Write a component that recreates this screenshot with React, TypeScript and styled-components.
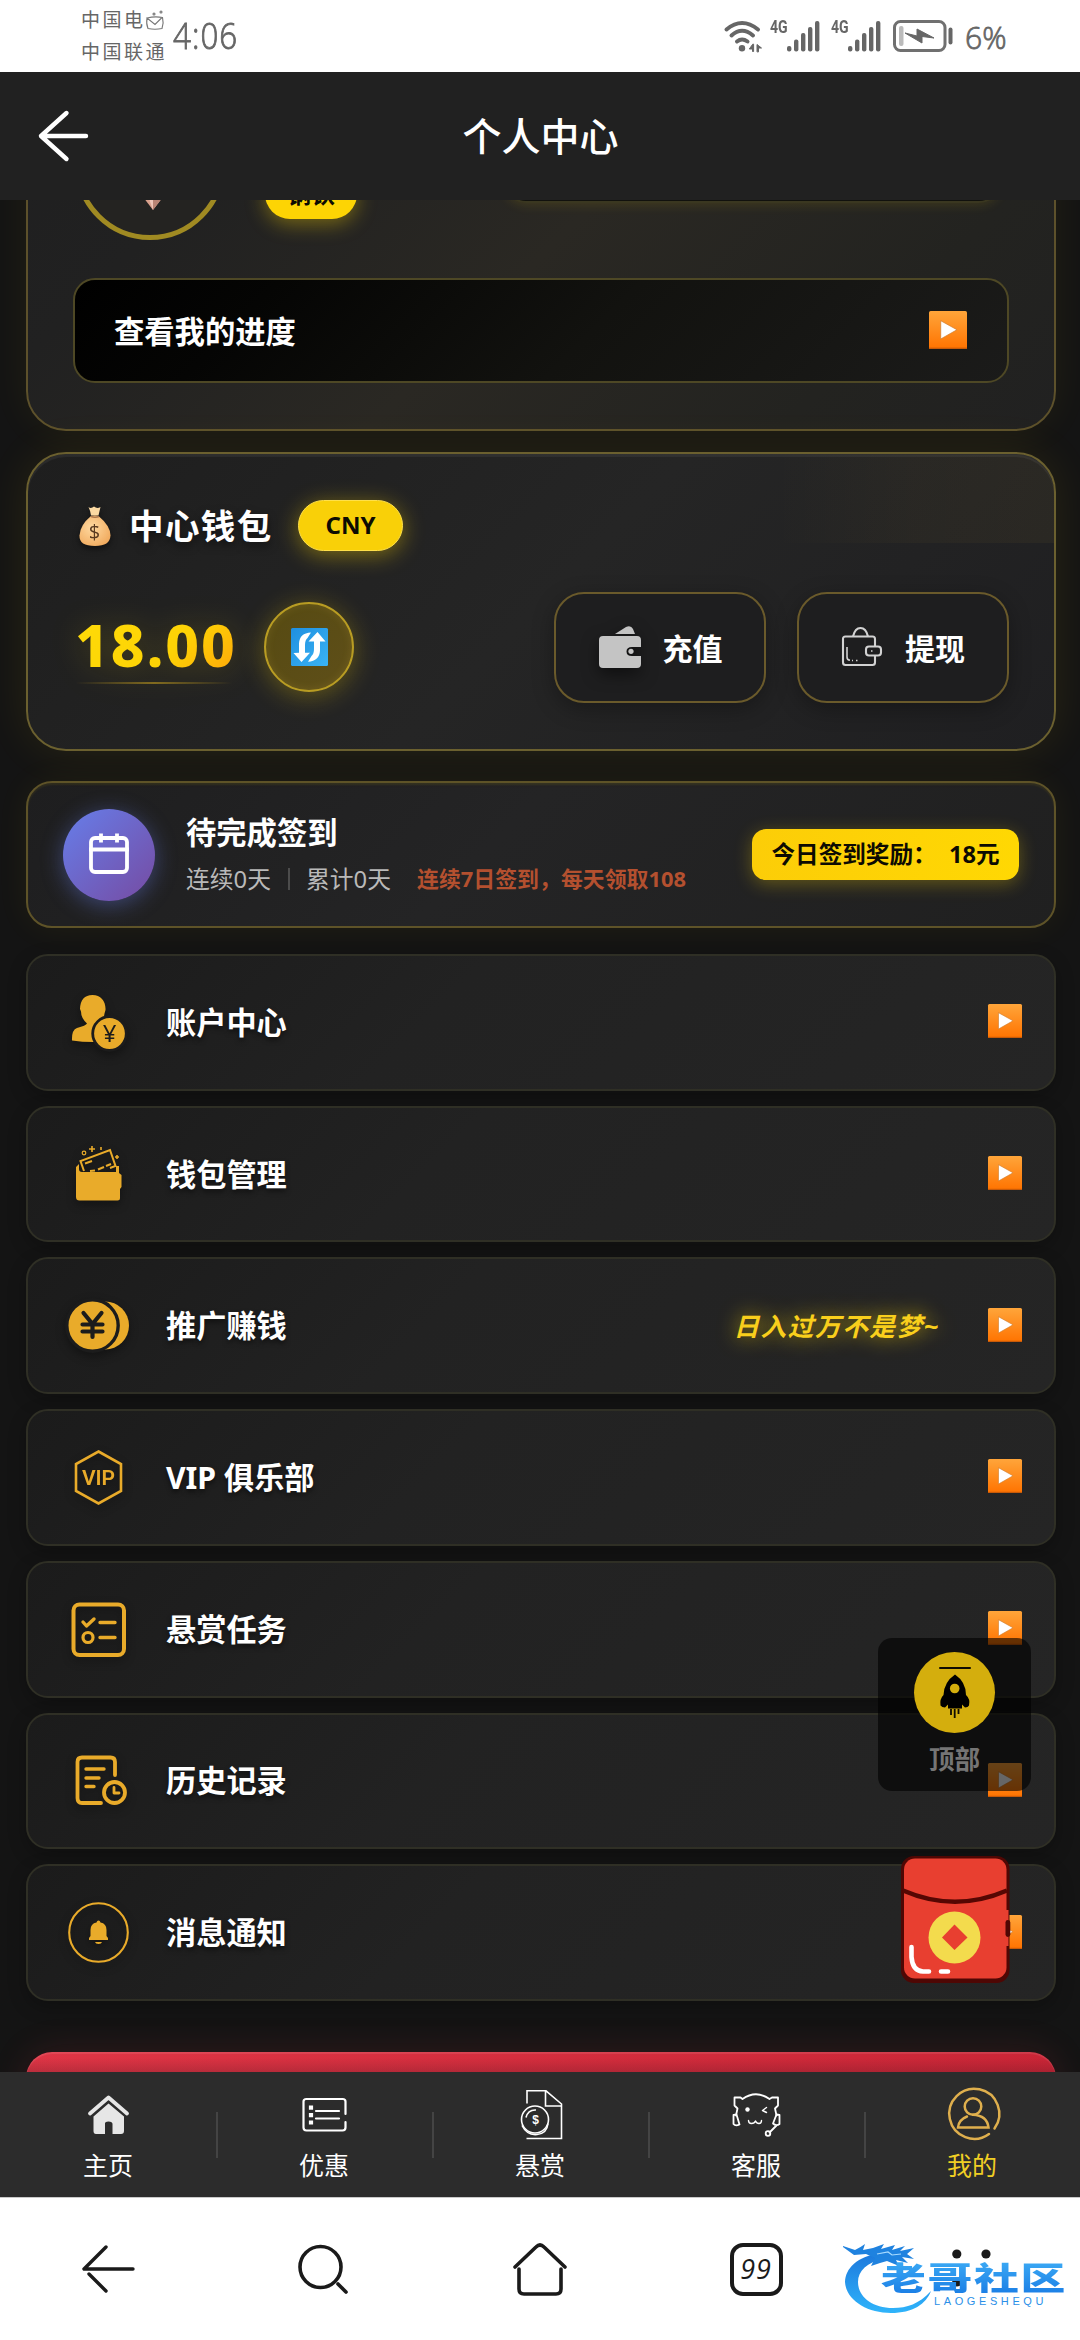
import React from "react";
import styled, { createGlobalStyle, css } from "styled-components";

const GlobalStyle = createGlobalStyle`
  * { box-sizing: border-box; }
  html, body { margin: 0; padding: 0; background: #141414; }
  body { font-family: "Noto Sans", "Noto Sans CJK SC", sans-serif; color: #fff; }
  svg { display: block; flex: none; overflow: visible; }
`;

const gold = "#e9ab2a";

const Phone = styled.div`
  width: 1080px;
  height: 2340px;
  display: flex;
  flex-direction: column;
  overflow: hidden;
  background: #141414;
`;

/* ---------- status bar ---------- */

const StatusBar = styled.div`
  height: 72px;
  flex: none;
  background: #fff;
  color: #666;
  display: flex;
  align-items: center;
  padding: 0 74px 0 81px;
`;

const Carriers = styled.div`
  display: flex;
  flex-direction: column;
  gap: 12px;
  width: 89px;
`;

const Carrier = styled.div`
  height: 20px;
  font-size: 19px;
  line-height: 20px;
  letter-spacing: 2.5px;
  font-weight: 400;
  display: flex;
  align-items: center;
  white-space: nowrap;
`;

const Clock = styled.div`
  width: 84px;
  font-family: "Open Sans", sans-serif;
  font-size: 36px;
  line-height: 40px;
  font-weight: 300;
  -webkit-text-stroke: 0.9px #666;
  transform: scaleX(0.87);
  transform-origin: left center;
  margin-left: 3px;
  letter-spacing: 1.2px;
`;

const StatusRight = styled.div`
  margin-left: auto;
  display: flex;
  align-items: center;
  height: 32px;
`;

const NetTag = styled.span`
  font-family: Roboto, sans-serif;
  font-size: 19px;
  line-height: 14px;
  font-weight: 700;
  align-self: flex-start;
  width: 17px;
  transform: scaleX(0.74);
  transform-origin: left center;
`;

const Percent = styled.span`
  font-family: "Open Sans", sans-serif;
  font-size: 32px;
  line-height: 32px;
  font-weight: 300;
  -webkit-text-stroke: 0.8px #666;
  margin-left: 11px;
  width: 41px;
  transform: translateY(1px) scaleX(0.94);
  transform-origin: left center;
`;

const Gap = styled.span<{ $w: number }>`
  width: ${(p) => p.$w}px;
  flex: none;
`;

/* ---------- header ---------- */

const Header = styled.header`
  height: 128px;
  flex: none;
  background: #212121;
  display: grid;
  grid-template-columns: 200px 1fr 200px;
  align-items: center;
  padding: 0 0 0 38px;
`;

const Title = styled.h1`
  margin: 0;
  padding-right: 37px;
  text-align: center;
  font-size: 39px;
  line-height: 50px;
  font-weight: 500;
`;

/* ---------- scroll area ---------- */

const Content = styled.main`
  position: relative;
  height: 1872px;
  flex: none;
  overflow: hidden;
  padding: 0 24px 0 26px;
  display: flex;
  flex-direction: column;
  background: #141414;
`;

const cardBase = css`
  flex: none;
  border: 2px solid #5d512b;
  border-radius: 40px;
`;

const ProfileCard = styled.section`
  ${cardBase}
  margin-top: -120px;
  height: 351px;
  padding: 8px 45px 46px;
  display: flex;
  flex-direction: column;
  background: linear-gradient(135deg, #1f1f20 0%, #212121 20%, #2a2823 50%, #232320 80%, #212121 100%);
  box-shadow: 0 0 40px rgba(255, 215, 0, 0.06);
`;

const ProfileTop = styled.div`
  height: 150px;
  display: flex;
  align-items: flex-end;
  margin-bottom: 38px;
`;

const Avatar = styled.div`
  width: 150px;
  height: 150px;
  margin-left: 2px;
  border-radius: 50%;
  border: 5px solid #a08a22;
  background: #242321;
  display: flex;
  justify-content: center;
  align-items: flex-end;
  padding: 0 0 25px 6px;
`;

const RankPill = styled.div`
  height: 50px;
  width: 92px;
  margin: 0 0 21px 40px;
  border-radius: 25px;
  background: #fdd404;
  color: #0c0a02;
  font-size: 24px;
  line-height: 50px;
  font-weight: 700;
  text-align: center;
  box-shadow: 0 5px 20px rgba(255, 215, 0, 0.38);
`;

const StatBox = styled.div`
  height: 90px;
  flex: 1;
  margin: 0 8px 37px 147px;
  border-radius: 22px;
  border: 2px solid #3a3720;
  background: #11110d;
  box-shadow: 0 2px 12px rgba(255, 215, 0, 0.12);
`;

const ProgressBar = styled.div`
  height: 105px;
  border: 2px solid #4e4825;
  border-radius: 22px;
  background: linear-gradient(135deg, #000 0%, #050504 20%, #12120f 55%, #1b1b1a 100%);
  display: flex;
  align-items: center;
  justify-content: space-between;
  padding: 0 40px 2px 39px;
  font-size: 30.3px;
  font-weight: 700;
`;

const WalletCard = styled.section`
  ${cardBase}
  position: relative;
  margin-top: 21px;
  height: 299px;
  padding: 46px 45px 45px;
  border-color: #6b602f;
  background: linear-gradient(135deg, #1e1e1e 0%, #252525 50%, #1f1f21 100%);
  box-shadow: 0 0 45px rgba(255, 215, 0, 0.09), inset 0 3px 1px rgba(255, 255, 255, 0.06);
`;

const WalletShine = styled.div`
  position: absolute;
  right: 0;
  top: 1px;
  width: 280px;
  height: 88px;
  border-top-right-radius: 38px;
  background: linear-gradient(90deg, rgba(255, 215, 0, 0) 0%, rgba(255, 200, 60, 0.03) 50%, rgba(255, 200, 60, 0.045) 100%);
`;

const WalletHead = styled.div`
  display: flex;
  align-items: center;
  height: 51px;
`;

const WalletTitle = styled.div`
  margin-left: 18px;
  width: 169px;
  font-size: 34.5px;
  line-height: 50px;
  letter-spacing: 1.4px;
  font-weight: 700;
  text-shadow: 0 4px 8px rgba(0, 0, 0, 0.5);
`;

const Currency = styled.div`
  width: 105px;
  height: 51px;
  border-radius: 26px;
  background: #f9d008;
  border: 1px solid #ffe04a;
  color: #0d0b02;
  font-size: 24px;
  line-height: 48px;
  font-weight: 700;
  text-align: center;
  box-shadow: 0 4px 22px rgba(255, 215, 0, 0.42);
`;

const WalletBody = styled.div`
  display: flex;
  align-items: center;
  height: 111px;
  margin-top: 41px;
`;

const Balance = styled.div`
  width: 158px;
  height: 76px;
  margin-left: 2px;
  margin-top: -3px;
  display: flex;
  flex-direction: column;
  filter: drop-shadow(0 2px 16px rgba(255, 215, 0, 0.2));
`;

const Amount = styled.span`
  align-self: flex-start;
  font-size: 58.5px;
  line-height: 72px;
  font-weight: 800;
  letter-spacing: 2px;
  white-space: nowrap;
  background: linear-gradient(135deg, #ffdc08 0%, #fdd205 60%, #ffa40a 100%);
  -webkit-background-clip: text;
  background-clip: text;
  color: transparent;
`;

const Underline = styled.span`
  height: 2px;
  margin-top: 2px;
  background: linear-gradient(90deg, rgba(180, 145, 30, 0), rgba(180, 145, 30, 0.65) 50%, rgba(180, 145, 30, 0));
`;

const RefreshButton = styled.div`
  width: 90px;
  height: 90px;
  margin-left: 31px;
  margin-top: -1px;
  border-radius: 50%;
  border: 2px solid #b89c23;
  background: linear-gradient(135deg, #564a12, #5f4f19);
  box-shadow: 0 4px 26px rgba(255, 215, 0, 0.3), inset 0 0 10px rgba(255, 225, 90, 0.12);
  display: flex;
  align-items: center;
  justify-content: center;
  padding-bottom: 1px;
`;

const Actions = styled.div`
  margin-left: auto;
  display: flex;
  gap: 31px;
`;

const ActionButton = styled.div<{ $gap: number }>`
  width: 212px;
  height: 111px;
  border: 2px solid #6a5a2b;
  border-radius: 30px;
  background: #1e1e1f;
  box-shadow: 0 6px 22px rgba(0, 0, 0, 0.3);
  display: flex;
  align-items: center;
  justify-content: center;
  gap: ${(p) => p.$gap}px;
  padding: 0 0 2px 1px;
  font-size: 30px;
  font-weight: 700;
`;

const CheckinCard = styled.section`
  flex: none;
  margin-top: 30px;
  height: 147px;
  border: 2px solid #5e5328;
  border-radius: 26px;
  background: linear-gradient(135deg, #1e1e1f 0%, #242425 45%, #202020 100%);
  box-shadow: 0 0 34px rgba(255, 215, 0, 0.06), inset 0 2px 2px rgba(255, 215, 0, 0.08);
  display: flex;
  align-items: center;
  padding: 0 35px;
`;

const CalendarBadge = styled.div`
  width: 92px;
  height: 92px;
  flex: none;
  border-radius: 50%;
  background: linear-gradient(135deg, #667eea 0%, #764ba2 100%);
  box-shadow: 0 4px 22px rgba(102, 126, 234, 0.42);
  display: flex;
  align-items: center;
  justify-content: center;
  padding-bottom: 1px;
`;

const CheckinText = styled.div`
  margin-left: 31px;
  display: flex;
  flex-direction: column;
`;

const CheckinTitle = styled.div`
  font-size: 30.3px;
  line-height: 42px;
  font-weight: 700;
`;

const CheckinMeta = styled.div`
  display: flex;
  align-items: center;
  margin-top: 7px;
  font-size: 23.8px;
  line-height: 36px;
  color: #b9b9b9;
  white-space: nowrap;
`;

const MetaLine = styled.i`
  width: 2px;
  height: 22px;
  margin: 0 16.5px;
  background: #4c4c4c;
`;

const Promo = styled.span`
  margin-left: 26px;
  font-size: 21.9px;
  font-weight: 700;
  color: #b4502f;
`;

const Reward = styled.div`
  margin-left: auto;
  width: 267px;
  height: 51px;
  border-radius: 14px;
  background: linear-gradient(90deg, #fccd08, #ffd803);
  color: #0d0b02;
  font-size: 23.6px;
  line-height: 51px;
  font-weight: 700;
  text-align: center;
  white-space: pre;
  box-shadow: 0 4px 18px rgba(255, 215, 0, 0.3);
`;

const Menu = styled.ul`
  flex: none;
  list-style: none;
  margin: 26px 0 0;
  padding: 0;
  height: 1047px;
  display: grid;
  grid-template-rows: repeat(7, 1fr);
  gap: 15px;
`;

const MenuItem = styled.li`
  border: 2px solid #2f2f25;
  border-radius: 22px;
  background: linear-gradient(135deg, #1b1b1b 0%, #222222 40%, #252525 100%);
  box-shadow: 0 6px 18px rgba(0, 0, 0, 0.25);
  display: flex;
  align-items: center;
  padding: 0 32px 0 40px;
`;

const MenuLabel = styled.span`
  margin-left: 37px;
  padding-top: 1px;
  font-size: 30.2px;
  line-height: 42px;
  font-weight: 700;
  text-shadow: 0 3px 5px rgba(0, 0, 0, 0.5);
`;

const MenuEnd = styled.span`
  margin-left: auto;
  display: flex;
  align-items: center;
  gap: 48px;
  padding-bottom: 2px;
`;

const Slogan = styled.em`
  font-size: 25.6px;
  letter-spacing: 1.6px;
  font-weight: 700;
  font-style: italic;
  color: #f9cf1c;
  text-shadow: 0 0 20px rgba(255, 215, 0, 0.7);
`;

const Logout = styled.div`
  flex: none;
  margin-top: 51px;
  height: 100px;
  border-radius: 26px;
  background: linear-gradient(180deg, rgba(0, 0, 0, 0) 6px, rgba(60, 20, 30, 0.22) 20px),
    linear-gradient(90deg, #df3545, #ca2536);
  box-shadow: 0 0 36px rgba(220, 53, 69, 0.16), inset 0 2px 1px rgba(255, 255, 255, 0.1);
`;

const BackTop = styled.div`
  position: absolute;
  left: 878px;
  top: 1438px;
  width: 153px;
  height: 153px;
  border-radius: 14px;
  background: rgba(0, 0, 0, 0.6);
  display: flex;
  flex-direction: column;
  align-items: center;
  padding-top: 14px;
  font-size: 25.6px;
  line-height: 34px;
  font-weight: 700;
  color: #757575;
  gap: 10px;
`;

const RedPacket = styled.div`
  position: absolute;
  left: 901px;
  top: 1656px;
  width: 112px;
  height: 130px;
`;

/* ---------- bottom bars ---------- */

const TabBar = styled.nav`
  height: 125px;
  flex: none;
  background: #2c2c2c;
  display: grid;
  grid-template-columns: repeat(5, 1fr);
`;

const Tab = styled.div<{ $active?: boolean }>`
  display: flex;
  flex-direction: column;
  align-items: center;
  padding-top: 17px;
  font-size: 25px;
  line-height: 36px;
  color: ${(p) => (p.$active ? "#f0cf24" : "#fff")};
  gap: 6px;
  & + & {
    background: linear-gradient(#444, #444) left 0 top 40px / 2px 46px no-repeat;
  }
`;

const BrowserBar = styled.div`
  position: relative;
  height: 143px;
  flex: none;
  background: #fff;
  border-top: 1px solid #c9c9c9;
  display: grid;
  grid-template-columns: repeat(5, 216px);
  justify-items: center;
  padding-top: 43px;
`;

const TabCount = styled.div`
  width: 53px;
  height: 53px;
  margin-top: 2px;
  border: 4px solid #1a1a1a;
  border-radius: 13px;
  color: #1a1a1a;
  font-family: "Open Sans", sans-serif;
  font-size: 27px;
  font-weight: 400;
  line-height: 43px;
  text-align: center;
  letter-spacing: 1px;
  font-style: italic;
`;

const Watermark = styled.div`
  position: absolute;
  left: 841px;
  top: 44px;
  width: 226px;
  height: 76px;
`;

const WatermarkName = styled.div`
  position: absolute;
  left: 40px;
  top: 20px;
  font-size: 32px;
  line-height: 31px;
  font-weight: 900;
  transform: scaleX(1.4);
  transform-origin: left center;
  letter-spacing: 1.2px;
  white-space: nowrap;
  background: linear-gradient(180deg, #3aa8f4, #1c80e6);
  -webkit-background-clip: text;
  background-clip: text;
  color: transparent;
`;

const WatermarkSub = styled.div`
  position: absolute;
  left: 93px;
  top: 53px;
  font-family: "Liberation Sans", sans-serif;
  font-size: 11px;
  line-height: 12px;
  letter-spacing: 3.6px;
  color: #2b8fe8;
`;

/* ---------- drawings ---------- */

const PlayIcon = ({ size }: { size: number }) => (
  <svg width={size} height={size} viewBox="0 0 34 34">
    <defs>
      <linearGradient id="play" x1="0" y1="0" x2="0" y2="1">
        <stop offset="0" stopColor="#ffa53a" />
        <stop offset="1" stopColor="#ff7300" />
      </linearGradient>
    </defs>
    <rect width="34" height="34" rx="1.5" fill="url(#play)" />
    <rect y="32.8" width="34" height="1.2" fill="#c85a08" />
    <path d="M10.500 8.7L25 16.8 10.500 25Z" fill="#fff" stroke="#ce7a2a" strokeWidth=".6" />
  </svg>
);

const Signal = () => (
  <svg width="33" height="31" viewBox="0 0 33 31" fill="#666">
    <rect x="0" y="25" width="4.4" height="5.5" rx="2" />
    <rect x="7" y="18.5" width="4.4" height="12" rx="2" />
    <rect x="14" y="12" width="4.4" height="18.5" rx="2" />
    <rect x="21" y="6" width="4.4" height="24.5" rx="2" />
    <rect x="28" y="0" width="4.4" height="30.5" rx="2" />
  </svg>
);

const Wifi = () => (
  <svg width="39" height="31" viewBox="0 0 39 31" fill="none" stroke="#666" strokeWidth="4" strokeLinecap="round">
    <path d="M2.5 8.5Q18 -4.5 34 8.5M7.5 14.5Q18 5 29 14.5M13 20.5Q18 16.5 23.5 20.5" />
    <circle cx="18" cy="27.2" r="3.2" fill="#666" stroke="none" />
    <path d="M29.6 23.5V30.5H28.5V28H25.3L28.5 23.5ZM33 30.5V23.5L37.5 27H34.5V30.5Z" fill="#666" stroke="#666" strokeWidth="1" />
  </svg>
);

const Battery = () => (
  <svg width="61" height="32" viewBox="0 0 61 32">
    <rect x="1.5" y="1.5" width="50.5" height="29" rx="6" fill="none" stroke="#707070" strokeWidth="3" />
    <rect x="6" y="6" width="4.5" height="20" rx="2" fill="#bbb" />
    <path d="M12 13L24 16V9L41 18 29 16.5V23Z" fill="#666" stroke="#666" strokeWidth="1" />
    <rect x="55.5" y="7.5" width="4" height="17" rx="2" fill="#666" />
  </svg>
);

const Mail = () => (
  <svg width="18" height="19" viewBox="0 0 18 19" fill="none" stroke="#777" strokeWidth="1.1">
    <path d="M1 7Q0 13 2 17.5Q9 19 16 17.5Q18 12 16.5 6.5Q9 5 1 7L9 13.5 16 6.5" />
    <circle cx="8" cy="3" r="1" />
    <circle cx="15" cy="1" r="1" />
  </svg>
);

const BagSvg = styled.svg`
  margin-left: 6px;
  filter: drop-shadow(0 3px 3px rgba(0, 0, 0, 0.5));
`;

const MoneyBag = () => (
  <BagSvg width="32" height="40" viewBox="0 0 32 40">
    <defs>
      <radialGradient id="bag" cx=".4" cy=".4" r=".7">
        <stop offset="0" stopColor="#ffd9a0" />
        <stop offset="1" stopColor="#f0a95c" />
      </radialGradient>
    </defs>
    <path d="M9.5 1Q12 3 15 .5Q18 3 21.5 1Q20.5 5 19.5 9.5H12Q11.5 5 9.5 1Z" fill="#fbd9a2" />
    <path d="M12 10Q16 9 19.5 10Q31.5 20 31.5 29.5Q31 40 16 40Q0 40 .5 29.5Q1 19 12 10Z" fill="url(#bag)" />
    <path d="M12 10.5Q16 12 20 10.5" stroke="#a8744a" strokeWidth="1.5" fill="none" />
    <text x="15.5" y="33" textAnchor="middle" fontSize="20" fontFamily="Open Sans, sans-serif" fill="#5a3a20">$</text>
  </BagSvg>
);

const RefreshIcon = () => (
  <svg width="37" height="38" viewBox="0 0 37 38">
    <defs>
      <linearGradient id="blue" x1="0" y1="0" x2="1" y2="1">
        <stop offset="0" stopColor="#1f8fe0" />
        <stop offset="1" stopColor="#3ab4f5" />
      </linearGradient>
    </defs>
    <rect width="37" height="38" rx="1.5" fill="url(#blue)" />
    <path d="M2.5 25L8 24.8V15.5Q8.5 5 20 4.5L16.5 10Q14 12 14 17V24.8H19L10.5 34Z" fill="#fff" />
    <path d="M34.5 13.5H29V22.5Q28.5 33 17 33.8L20.5 28Q23 26 23 21V13.5H17.5L26.5 4Z" fill="#fff" />
  </svg>
);

const ShadedSvg = styled.svg`
  filter: drop-shadow(0 6px 8px rgba(0, 0, 0, 0.5));
`;

const WalletFill = () => (
  <ShadedSvg width="42" height="42" viewBox="0 0 42 42" fill="#c4c4c4">
    <path d="M16 8L27 1Q32-1 34 3L36 8Z" />
    <path d="M4 10H38Q42 10 42 14V21H33Q27.5 21 27.5 25.5T33 30H42V38Q42 42 38 42H4Q0 42 0 38V14Q0 10 4 10Z" />
    <circle cx="32" cy="25.3" r="2.6" />
  </ShadedSvg>
);

const WalletLine = () => (
  <svg width="40" height="39" viewBox="0 0 40 39" fill="none" stroke="#d2d2d2" strokeWidth="2.1">
    <path d="M33 19.5V12Q33 9.5 30.5 9.5H3.5Q1 9.5 1 12V35.5Q1 38 3.5 38H30.5Q33 38 33 35.5V28.5" />
    <path d="M11 9.5Q13 1 18.5 1T26 9.5" />
    <rect x="24" y="19.5" width="15" height="9" rx="3" />
    <path d="M29 24h1.5M5 20V30Q5 33 8 33.3M10 33.5h1M14 33.5H15.5" strokeWidth="1.6" />
  </svg>
);

const CalendarIcon = () => (
  <svg width="40" height="42" viewBox="0 0 40 42" fill="none" stroke="#fff" strokeWidth="3.8" strokeLinecap="round">
    <rect x="2" y="5" width="36" height="34" rx="4" />
    <path d="M2 16.500H38M12 2.500V7.500M28 2.500V7.500" strokeLinecap="square" />
  </svg>
);

const MenuSvg = styled.svg.attrs({ width: 61, height: 61, viewBox: "0 0 61 61" })`
  filter: drop-shadow(0 4px 5px rgba(0, 0, 0, 0.35));
`;

const AccountIcon = () => (
  <MenuSvg fill={gold}>
    <path d="M24.5 3C33 3 38 9.5 37.5 18L36.5 21.5Q36 27 32 30.5V35L40 40V49.5Q20 51 4 48.5Q3.5 38 9 36Q18 33.5 19 31.5Q13 26 13 19.5L12 17Q12.5 3 24.5 3Z" />
    <circle cx="41.5" cy="41.5" r="16.8" fill={gold} stroke="#1c1c1c" strokeWidth="2.8" />
    <text x="41.5" y="50" textAnchor="middle" fontSize="24" fontFamily="Noto Sans" fontWeight="400" fill="#1c1c1c">¥</text>
  </MenuSvg>
);

const PurseIcon = () => (
  <MenuSvg fill={gold}>
    <path d="M8 23L11 20V25Q11 28 14 28H48V22H51V29L53.5 31V43L52 45V54Q52 56.5 49.5 56.5H11.5Q8 56.5 8 53Z" />
    <path d="M16 27L12.5 17 42 6 47.5 22 42 24" fill="none" stroke={gold} strokeWidth="2" />
    <path d="M17 19.5L24 17M30 25.5L36 23M38 22L43 20M22 27L27 26.5" fill="none" stroke={gold} strokeWidth="2" />
    <circle cx="16" cy="9" r="1.8" fill="none" stroke={gold} strokeWidth="1.2" />
    <path d="M24 2V8M21 5H27M49 11V15M47 13H51M33 3V6" stroke={gold} strokeWidth="1.6" fill="none" />
  </MenuSvg>
);

const EarnIcon = () => (
  <MenuSvg>
    <circle cx="37" cy="30.5" r="24" fill={gold} />
    <circle cx="24.5" cy="30.5" r="25.7" fill={gold} stroke="#1c1c1c" strokeWidth="3.4" />
    <path d="M15.5 18L24.5 29 33.5 18M24.5 28V42M14.5 29.5H34.5M14.5 36.5H34.5" stroke="#1c1c1c" strokeWidth="4.2" fill="none" strokeLinecap="round" />
  </MenuSvg>
);

const VipIcon = () => (
  <MenuSvg fill="none" stroke={gold} strokeWidth="2.6">
    <path d="M30.5 4.5L53 17V44L30.5 56.5 8 44V17Z" />
    <text x="30.5" y="38" textAnchor="middle" fontSize="21" fontFamily="Roboto" fontWeight="600" fill={gold} stroke="none">VIP</text>
  </MenuSvg>
);

const TaskIcon = () => (
  <MenuSvg fill="none" stroke={gold} strokeWidth="4" strokeLinecap="round" strokeLinejoin="round">
    <rect x="5.5" y="5.5" width="50.5" height="50.5" rx="6" />
    <path d="M15 23L18.5 27 26 20M32 23.5H47M32 38.5H47" strokeWidth="3.4" />
    <circle cx="20" cy="38.5" r="5" strokeWidth="3.2" />
  </MenuSvg>
);

const HistoryIcon = () => (
  <MenuSvg fill="none" stroke={gold} strokeWidth="3.8" strokeLinecap="round" strokeLinejoin="round">
    <path d="M47 25V12Q47 7.5 42.5 7.5H14Q9.5 7.5 9.5 12V48Q9.5 53 14 53H33" />
    <path d="M18 19H36M18 28H31M18 36.5H26" strokeWidth="3.4" />
    <circle cx="46.5" cy="42.5" r="10.5" />
    <path d="M46 37.5V43H51" strokeWidth="2.8" />
  </MenuSvg>
);

const NoticeIcon = () => (
  <MenuSvg fill="none" stroke={gold} strokeWidth="2.1">
    <circle cx="30.5" cy="30.5" r="29.3" />
    <path d="M21 38H40V36L38.5 34V28Q38.5 21.5 32.5 20.5Q32 18.5 30.5 18.5T28.5 20.5Q22.5 21.5 22.5 28V34L21 36ZM27 40H34Q33.5 42 30.5 42T27 40Z" fill={gold} stroke="none" />
  </MenuSvg>
);

const Rocket = () => (
  <svg width="81" height="81" viewBox="0 0 81 81">
    <circle cx="40.5" cy="40.5" r="40.5" fill="#d4ae0d" />
    <path d="M26 16H56" stroke="#100c02" strokeWidth="2" strokeLinecap="round" />
    <path d="M41 22.5Q52 30 52 43Q56.5 47 55 53.5Q54 55.5 51 55.5L48 52.5V56.5H34V52.5L31 55.5Q28 55.5 26.5 53.5Q25.5 47 29.5 43Q30 30 41 22.5Z" fill="#000" />
    <circle cx="40.7" cy="36.5" r="4.8" fill="#d4ae0d" />
    <path d="M37 57V63M40.7 57V66M44.5 57V62" stroke="#100c02" strokeWidth="1.8" />
  </svg>
);

const Packet = () => (
  <svg width="112" height="130" viewBox="0 0 112 130">
    <rect x="0" y="0" width="108.5" height="127" rx="13" fill="#4f0704" />
    <rect x="3" y="2.5" width="102.5" height="120" rx="11" fill="#e83f30" />
    <path d="M2 34.5Q54 57 106 34.5" fill="none" stroke="#560703" strokeWidth="4.5" />
    <rect x="103" y="54" width="4.5" height="36" fill="#e83f30" />
    <rect x="104.5" y="64" width="4.8" height="17" rx="2.4" fill="#4f0704" />
    <circle cx="53.5" cy="81.5" r="26" fill="#f3db4d" />
    <path d="M53.5 68.5L66.5 81.5 53.5 94 41 81.5Z" fill="#e83f30" />
    <path d="M10.5 91V101Q11.5 115 22 115.5H28M40 115.5H47" fill="none" stroke="#fff" strokeWidth="4.6" strokeLinecap="round" />
  </svg>
);

const TabSvg = styled.svg.attrs({ width: 52, height: 52, viewBox: "0 0 52 52" })``;

const HomeTab = () => (
  <TabSvg fill="#e6e6e6">
    <path d="M8 24.5L26.5 8.5 45 24.5" fill="none" stroke="#e6e6e6" strokeWidth="3.8" strokeLinecap="round" strokeLinejoin="round" />
    <path d="M26.5 14.5L42 27.5V42Q42 45 39 45H30.5V35Q30.5 32.5 26.5 32.5T23 35V45H14Q11.5 45 11.5 42V27.5Z" />
  </TabSvg>
);

const OfferTab = () => (
  <TabSvg fill="none" stroke="#fff" strokeWidth="2.2" strokeLinecap="round">
    <path d="M47.5 25V12.500Q47.5 10 44.5 10H8.5Q5.5 10 5.5 12.500V38.500Q5.5 41.500 8.5 41.500H44.5Q47.5 41.500 47.5 38.500V33" />
    <path d="M18 22H41M18 29.500H41" />
    <path d="M13 16.500V35.500" strokeWidth="4.2" strokeLinecap="butt" strokeDasharray="4.200 3.300" />
  </TabSvg>
);

const BountyTab = () => (
  <TabSvg fill="none" stroke="#fff" strokeWidth="1.6">
    <path d="M13 14.500V1.800H32L47.500 15V49.500H12.500M31.500 1.800V17H47.500" />
    <circle cx="21" cy="30.500" r="13.500" />
    <path d="M12 28.500Q14 20.500 22 21M8 36.500Q13 46.500 23 45.500T34 34.500" />
    <text x="21.5" y="35" textAnchor="middle" fontSize="12" fontFamily="Liberation Sans" fontWeight="700" fill="#fff" stroke="none">$</text>
  </TabSvg>
);

const ServiceTab = () => (
  <TabSvg fill="none" stroke="#fff" strokeWidth="1.8" strokeLinecap="round" strokeLinejoin="round">
    <path d="M12.5 10Q26 .5 39.5 10M12.5 10L10.5 8.5H4.500V16.500L7.500 19.500 6 26.500M39.500 10L42 8.500H48V16.500L45 19.500 46.500 26.500" />
    <path d="M3.500 26L6.500 25.500 9.500 35.500Q5.500 37.500 3.500 35ZM49.500 26L46.500 25.500 43 34.500Q46.500 37.500 49.500 35ZM46.500 36.500L39.500 43.500" />
    <circle cx="38" cy="44.500" r="2.300" />
    <circle cx="17.500" cy="20.500" r="2.200" fill="#fff" stroke="none" />
    <path d="M36.500 18.500L32.500 21.500 36.500 23.500M18.500 31.500Q18.500 34.500 21.500 34.500T25.500 32Q26.500 34.500 29 34.500T31.500 31.500" strokeWidth="1.400" />
  </TabSvg>
);

const MineTab = () => (
  <TabSvg fill="none" stroke="#dfaf4d" strokeWidth="2.5" strokeLinecap="round">
    <path d="M48.500 39.500A25 25 0 1 0 43 45" />
    <circle cx="27" cy="17.500" r="8.300" />
    <path d="M21 27.500Q12.500 31 12 38.500H42.500Q41 26.500 27 25.800" />
  </TabSvg>
);

const LineIcon = ({ d, w, children }: { d: string; w: number; children?: React.ReactNode }) => (
  <svg width="56" height="56" viewBox="0 0 56 56" fill="none" stroke="#1a1a1a" strokeWidth={w} strokeLinecap="round" strokeLinejoin="round">
    <path d={d} />
    {children}
  </svg>
);

const Dragon = () => (
  <svg width="226" height="76" viewBox="0 0 226 76">
    <defs>
      <linearGradient id="dragon" x1="0" y1="0" x2="0" y2="1">
        <stop offset="0" stopColor="#1d78dc" />
        <stop offset="1" stopColor="#2fb4fb" />
      </linearGradient>
    </defs>
    <path d="M40 11C16 14 4 27 4 40C5 58 26 71 50 71C72 71 85 62 90 49C78 62 66 66 52 66C30 66 17 54 17 40C17 29 26 20 43 17Z" fill="url(#dragon)" />
    <path d="M2 4L14 8Q20 5 24 2L22 8 32 6 43 2 40 7 54 3 51 8 64 4 59 9 73 6 66 12 73 17 61 15 67 21 55 18 58 24 46 19 39 21 30 24 34 16 25 12 13 13 2 5Z" fill="#1f82df" />
    <path d="M36 12L47 10 51 13 60 12" stroke="#a9dcff" strokeWidth="1.2" fill="none" />
  </svg>
);

const menu = [
  { label: "账户中心", icon: <AccountIcon /> },
  { label: "钱包管理", icon: <PurseIcon /> },
  { label: "推广赚钱", icon: <EarnIcon />, slogan: "日入过万不是梦~" },
  { label: "VIP 俱乐部", icon: <VipIcon /> },
  { label: "悬赏任务", icon: <TaskIcon /> },
  { label: "历史记录", icon: <HistoryIcon /> },
  { label: "消息通知", icon: <NoticeIcon /> },
];

const tabs = [
  { label: "主页", icon: <HomeTab /> },
  { label: "优惠", icon: <OfferTab /> },
  { label: "悬赏", icon: <BountyTab /> },
  { label: "客服", icon: <ServiceTab /> },
  { label: "我的", icon: <MineTab />, active: true },
];

export default function App() {
  return (
    <Phone>
      <GlobalStyle />
      <StatusBar>
        <Carriers>
          <Carrier>中国电<Mail /></Carrier>
          <Carrier>中国联通</Carrier>
        </Carriers>
        <Clock>4:06</Clock>
        <StatusRight>
          <Wifi />
          <Gap $w={7} />
          <NetTag>4G</NetTag>
          <Signal />
          <Gap $w={11} />
          <NetTag>4G</NetTag>
          <Signal />
          <Gap $w={12} />
          <Battery />
          <Percent>6%</Percent>
        </StatusRight>
      </StatusBar>

      <Header>
        <svg width="52" height="52" viewBox="0 0 52 52" fill="none" stroke="#fff" strokeWidth="4.4" strokeLinecap="round" strokeLinejoin="round">
          <path d="M28.5 3L3 26 28.5 49M3 26H48" />
        </svg>
        <Title>个人中心</Title>
      </Header>

      <Content>
        <ProfileCard>
          <ProfileTop>
            <Avatar>
              <svg width="52" height="46" viewBox="0 0 52 46">
                <path d="M0 12L12 0H40L52 12 26 46Z" fill="#d9a08c" />
                <path d="M14 12H26V46Z" fill="#efc6b8" />
                <path d="M26 12L52 12 26 46Z" fill="#b98474" />
              </svg>
            </Avatar>
            <RankPill>钢铁</RankPill>
            <StatBox />
          </ProfileTop>
          <ProgressBar>
            查看我的进度
            <PlayIcon size={38} />
          </ProgressBar>
        </ProfileCard>

        <WalletCard>
          <WalletShine />
          <WalletHead>
            <MoneyBag />
            <WalletTitle>中心钱包</WalletTitle>
            <Currency>CNY</Currency>
          </WalletHead>
          <WalletBody>
            <Balance>
              <Amount>18.00</Amount>
              <Underline />
            </Balance>
            <RefreshButton><RefreshIcon /></RefreshButton>
            <Actions>
              <ActionButton $gap={22}><WalletFill />充值</ActionButton>
              <ActionButton $gap={23}><WalletLine />提现</ActionButton>
            </Actions>
          </WalletBody>
        </WalletCard>

        <CheckinCard>
          <CalendarBadge><CalendarIcon /></CalendarBadge>
          <CheckinText>
            <CheckinTitle>待完成签到</CheckinTitle>
            <CheckinMeta>
              <span>连续0天</span>
              <MetaLine />
              <span>累计0天</span>
              <Promo>连续7日签到，每天领取108</Promo>
            </CheckinMeta>
          </CheckinText>
          <Reward>今日签到奖励：  18元</Reward>
        </CheckinCard>

        <Menu>
          {menu.map((m) => (
            <MenuItem key={m.label}>
              {m.icon}
              <MenuLabel>{m.label}</MenuLabel>
              <MenuEnd>
                {m.slogan && <Slogan>{m.slogan}</Slogan>}
                <PlayIcon size={34} />
              </MenuEnd>
            </MenuItem>
          ))}
        </Menu>

        <Logout />

        <BackTop>
          <Rocket />
          顶部
        </BackTop>
        <RedPacket><Packet /></RedPacket>
      </Content>

      <TabBar>
        {tabs.map((t) => (
          <Tab key={t.label} $active={t.active}>
            {t.icon}
            {t.label}
          </Tab>
        ))}
      </TabBar>

      <BrowserBar>
        <LineIcon w={3.4} d="M26 6L4 28H53M9 33L26 50" />
        <LineIcon w={3.6} d="M42 43L50 51"><circle cx="24.5" cy="26" r="20.5" /></LineIcon>
        <LineIcon w={3.6} d="M3 26L24 6Q28 2 32 6L53 26M7 28V48Q7 53 12 53H44Q49 53 49 48V28" />
        <TabCount>99</TabCount>
        <svg width="56" height="56" viewBox="0 0 56 56" fill="#1a1a1a">
          <circle cx="12.8" cy="13" r="4.6" />
          <circle cx="42" cy="13" r="4.6" />
          <circle cx="12.8" cy="41" r="4.6" />
        </svg>
        <Watermark>
          <Dragon />
          <WatermarkName>老哥社区</WatermarkName>
          <WatermarkSub>LAOGESHEQU</WatermarkSub>
        </Watermark>
      </BrowserBar>
    </Phone>
  );
}
